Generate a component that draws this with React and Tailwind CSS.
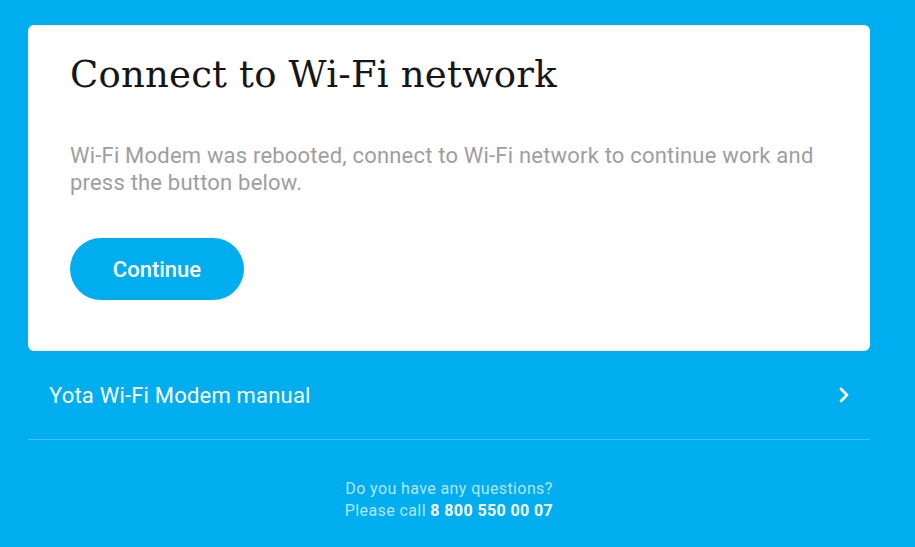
export default function App() {
  return (
    <div className="min-h-screen bg-[#00aeef] pl-[28px] pr-[45px] pt-[25px] font-['Roboto',sans-serif]">
      {/* CARD */}
      <div className="rounded-[6px] bg-white pl-[42px] pr-8 pt-[28px] pb-[51px]">
        <h1 className="font-['DejaVu_Serif',serif] text-[37px] leading-[44px] tracking-[0.2px] text-[#161616]">
          Connect to Wi-Fi network
        </h1>
        <p className="mt-[45px] text-[22px] leading-[27px] tracking-[0.2px] text-[#9e9e9e]">
          Wi-Fi Modem was rebooted, connect to Wi-Fi network to continue work and
          <br />
          press the button below.
        </p>
        <button className="mt-[42px] h-[62px] w-[174px] rounded-full bg-[#00aeef] text-[22px] font-medium text-white">
          Continue
        </button>
      </div>

      {/* MANUAL LINK */}
      <div className="flex h-[89px] items-center justify-between border-b border-[#3cc3f3] pl-[21px] pr-[20px] text-white">
        <span className="text-[22px] tracking-[0.2px]">Yota Wi-Fi Modem manual</span>
        <svg width="12" height="18" viewBox="0 0 12 18" fill="none">
          <path d="M3 3l6 6-6 6" stroke="white" strokeWidth="2.8" strokeLinecap="round" strokeLinejoin="round" />
        </svg>
      </div>

      {/* FOOTER */}
      <div className="mt-[38px] text-center text-[16px] leading-[22px] tracking-[0.4px] text-[#b3e6fb]">
        <p>Do you have any questions?</p>
        <p>
          Please call <span className="font-bold text-white">8 800 550 00 07</span>
        </p>
      </div>
    </div>
  );
}
